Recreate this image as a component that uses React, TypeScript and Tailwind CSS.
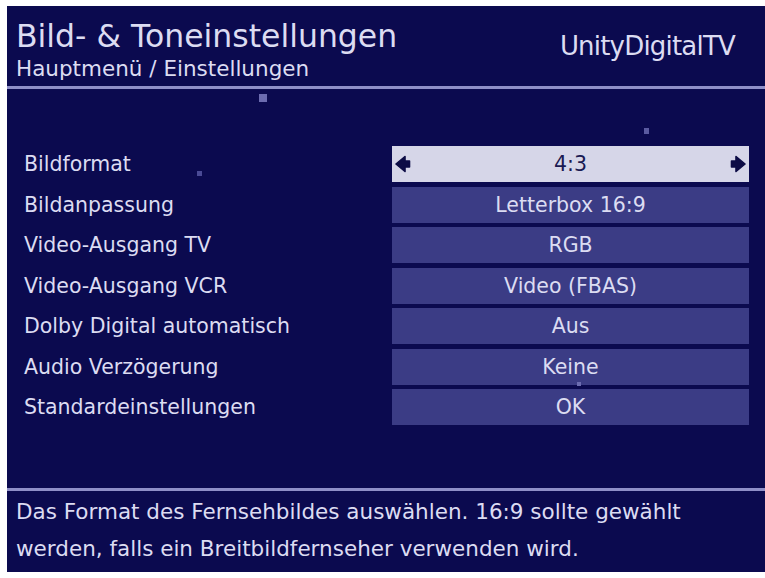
import React from "react";

const rows: [string, string][] = [
  ["Bildformat", "4:3"],
  ["Bildanpassung", "Letterbox 16:9"],
  ["Video-Ausgang TV", "RGB"],
  ["Video-Ausgang VCR", "Video (FBAS)"],
  ["Dolby Digital automatisch", "Aus"],
  ["Audio Verzögerung", "Keine"],
  ["Standardeinstellungen", "OK"],
];

function Arrow({ dir }: { dir: "left" | "right" }) {
  return (
    <svg width="16" height="18" viewBox="0 0 16 18" className={dir === "right" ? "" : "-scale-x-100"}>
      <path d="M1.5 6 H6 V1.5 L15 9 L6 16.5 V12 H1.5 Z" fill="#0d0c45" stroke="#0d0c45" strokeWidth="1.6" strokeLinejoin="round" />
    </svg>
  );
}

export default function App() {
  return (
    <div
      className="w-[765px] h-[578px] bg-white pl-[7px] pt-[6px] pb-[6px]"
      style={{ fontFamily: '"DejaVu Sans", "Noto Sans", sans-serif' }}
    >
      <div className="relative h-full bg-[#0b0a4f] flex flex-col text-[#dcdcf2]">
        <div className="h-[80px] flex items-start justify-between pl-[9px] pr-[30px]">
          <div className="flex flex-col pt-[12px]">
            <div className="text-[31.5px] leading-[36px]">Bild- &amp; Toneinstellungen</div>
            <div className="text-[21.5px] leading-[24px] mt-[3px]">Hauptmenü / Einstellungen</div>
          </div>
          <div className="pt-[25px] text-[26px] leading-[30px] tracking-[-0.8px]">UnityDigitalTV</div>
        </div>
        <div className="h-[3px] bg-[#8f8fc8]" />
        <div className="flex flex-col gap-[4.5px] pt-[57px] pl-[17px] pr-[16px]">
          {rows.map(([label, value], i) => (
            <div key={label} className="flex items-center h-[36px]">
              <div className="flex-1 text-[20.5px] leading-[24px]">{label}</div>
              <div
                className={
                  "w-[357px] h-[36px] flex items-center justify-between px-[3px] text-[20.5px] leading-[24px] " +
                  (i === 0 ? "bg-[#d6d6e8] text-[#1a1a52]" : "bg-[#3b3c85]")
                }
              >
                {i === 0 ? <Arrow dir="left" /> : <span className="w-[16px]" />}
                <span>{value}</span>
                {i === 0 ? <Arrow dir="right" /> : <span className="w-[16px]" />}
              </div>
            </div>
          ))}
        </div>
        <div className="flex-1" />
        <div className="h-[3px] bg-[#8f8fc8]" />
        <div className="h-[81px] pl-[9px] pt-[2px] text-[21.5px] leading-[37px]">
          Das Format des Fernsehbildes auswählen. 16:9 sollte gewählt
          <br />
          werden, falls ein Breitbildfernseher verwenden wird.
        </div>
        <div className="absolute left-[252px] top-[88px] w-[8px] h-[8px] bg-[#6c6cb0]" />
        <div className="absolute left-[637px] top-[122px] w-[5px] h-[6px] bg-[#5a5aa0]" />
        <div className="absolute left-[190px] top-[165px] w-[5px] h-[5px] bg-[#4a4a95]" />
        <div className="absolute left-[570px] top-[376px] w-[4px] h-[4px] bg-[#6c6cb0]" />
      </div>
    </div>
  );
}
